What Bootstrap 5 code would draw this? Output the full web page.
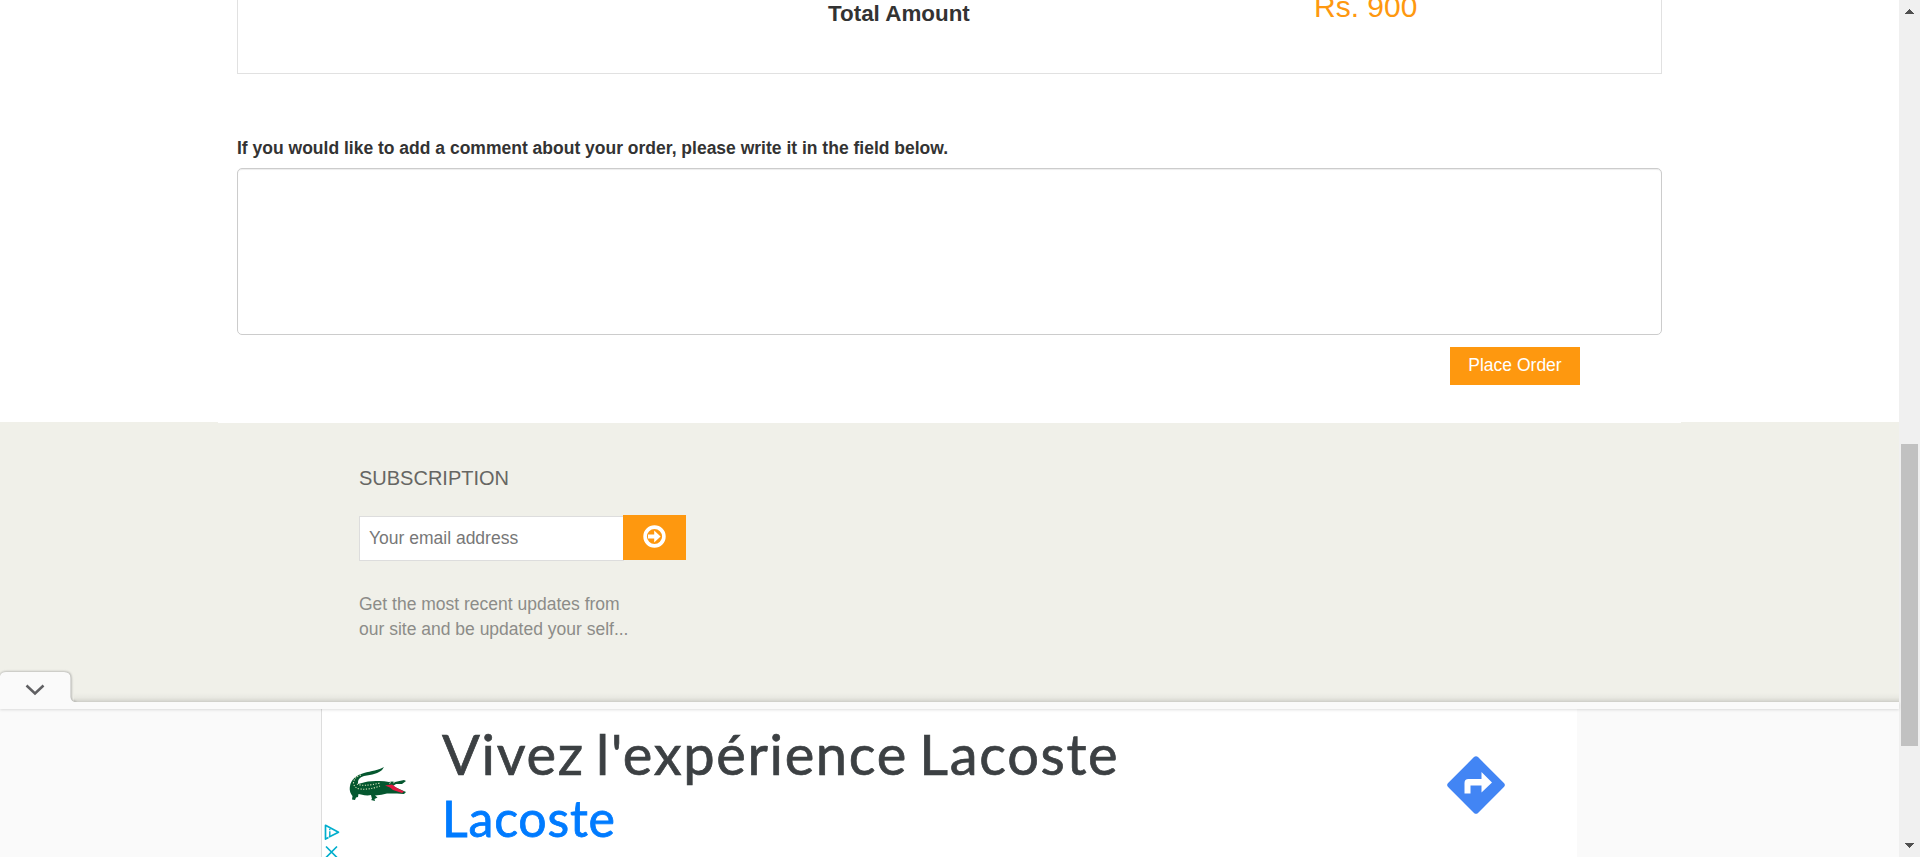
<!DOCTYPE html>
<html lang="en">
<head>
<meta charset="utf-8">
<meta name="viewport" content="width=device-width, initial-scale=1">
<title>Checkout</title>
<link href="https://cdn.jsdelivr.net/npm/bootstrap@5.3.0/dist/css/bootstrap.min.css" rel="stylesheet">
<style>
  body { font-family: "Liberation Sans", Arial, sans-serif; font-size: 17.5px; line-height: 25px; color: #333; background: #fff; }
  .page-view { width: 1899px; }
  .shop-container { width: 1463px; margin-left: 218px; padding: 0 19px; background: #fff; height: 423px; }
  .total-box { height: 74px; border: 1px solid #e1e1e1; border-top: 0; }
  .total-label { width: 730px; font-size: 22.4px; line-height: 26px; padding: 1px 0 0 590px; }
  .total-price { font-size: 30px; line-height: 30px; color: #fe980f; padding-left: 346px; margin-top: -8px; }
  .order-label { margin-top: 62px; line-height: 25px; margin-bottom: 7px; }
  .order-note { height: 167px; border: 1px solid #ccc; border-radius: 5px; resize: none; box-shadow: inset 0 1px 1px rgba(0,0,0,.075); }
  .btn-orange { background: #fe980f; color: #fff; border: 0; border-radius: 0; }
  .btn-place { width: 130px; height: 38px; margin: 12px 82px 0 0; padding: 0 0 2px; font-size: 17.5px; line-height: 25px; }
  .shop-footer { background: #f0f0e9; height: 280px; padding: 44px 0 0 359px; margin-top: -1px; }
  .footer-title { font-size: 20px; line-height: 24px; color: #666663; margin: 0 0 25px; }
  .mail-input { width: 265px; height: 45px; border: 1px solid #ddd; border-radius: 0; padding: 0 9px 1px; font-size: 17.5px; margin-top: 1px; }
  .mail-input::placeholder { color: #777; opacity: 1; }
  .btn-mail { width: 63px; height: 45px; margin-left: -1px; padding: 0 0 3px; position: relative; }
  .footer-text { color: #8c8c88; margin-top: 31px; line-height: 25px; }
  .ad-wrap { height: 155px; background: #fafafa; position: relative; }
  .ad-rail { height: 7px; background: #fafafa; box-shadow: 0 1px 3px rgba(0,0,0,.13); position: relative; }
  .ad-shade { position: absolute; left: 74px; right: 0; top: -9px; height: 9px; background: linear-gradient(rgba(0,0,0,0), rgba(0,0,0,.03) 50%, rgba(0,0,0,.12)); }
  .ad-tab { position: absolute; left: 0; top: -33px; }
  .ad-panel { width: 1256px; height: 148px; margin-left: 321px; background: #fff; border-left: 1px solid #ddd; overflow: hidden; }
  .ad-choices { width: 21px; padding: 115px 0 0 2px; }
  .ad-copy { width: 1036px; padding-left: 35px; font-family: Lato, "Open Sans", sans-serif; white-space: nowrap; }
  .ad-title { font-size: 56px; line-height: 64px; color: #3c4043; margin-top: 13px; letter-spacing: 1.65px; word-spacing: -4.500px; -webkit-text-stroke: .7px #3c4043; }
  .ad-brand { font-size: 50px; line-height: 58px; color: #007bff; margin-top: 3px; letter-spacing: .8px; -webkit-text-stroke: .8px #007bff; }
  .scroll-rail { width: 21px; background: #f0f0f0; padding: 9px 0 9px; }
  .scroll-thumb { width: 17px; height: 302px; margin: 430px 0 0 2px; background: #c1c1c1; }
</style>
</head>
<body class="overflow-hidden">
<div class="d-flex vh-100 overflow-hidden">
  <div class="page-view flex-shrink-0">
    <main class="shop-container position-relative">
      <div class="total-box d-flex">
        <div class="total-label fw-bold text-nowrap">Total Amount</div>
        <div class="total-price text-nowrap">Rs. 900</div>
      </div>
      <label class="order-label fw-bold d-block" for="note">If you would like to add a comment about your order, please write it in the field below.</label>
      <textarea id="note" class="form-control order-note"></textarea>
      <div class="d-flex justify-content-end">
        <button class="btn btn-orange btn-place" type="button">Place Order</button>
      </div>
    </main>
    <footer class="shop-footer">
      <h2 class="footer-title fw-normal">SUBSCRIPTION</h2>
      <form class="d-flex align-items-start">
        <input class="form-control mail-input" type="email" placeholder="Your email address">
        <button class="btn btn-orange btn-mail d-flex align-items-center justify-content-center" type="button" aria-label="Subscribe">
          <svg width="23" height="23" viewBox="0 0 23 23"><circle cx="11.500" cy="11.500" r="9.400" fill="none" stroke="#fff" stroke-width="3.600"/><path d="M5 9.500h6.200V5.600l6.400 5.900-6.400 5.900v-3.900H5z" fill="#fff"/></svg>
        </button>
      </form>
      <p class="footer-text mb-0">Get the most recent updates from<br>our site and be updated your self...</p>
    </footer>
    <aside class="ad-wrap">
      <div class="ad-shade"></div>
      <div class="ad-rail"></div>
      <svg class="ad-tab" width="82" height="41" viewBox="0 0 82 41">
        <defs><filter id="soft" x="-10%" y="-20%" width="120%" height="140%"><feGaussianBlur stdDeviation="1.300"/></filter></defs>
        <path d="M0 6Q1 2.500 6 2.500H65Q71.500 2.500 71.500 9V28Q72 32.500 76 32.500V34H0z" fill="#777" opacity=".55" filter="url(#soft)"/>
        <path d="M0 7Q1 3 6 3H64Q70.500 3 70.500 9V28Q71 33 76 33H82V39H0z" fill="#fafafa"/>
        <path d="M26.500 16.500L35 24.500L43.500 16.500" fill="none" stroke="#606063" stroke-width="2.500"/>
      </svg>
      <div class="ad-panel d-flex">
        <div class="ad-choices flex-shrink-0">
          <svg class="d-block" width="16" height="17" viewBox="0 0 16 17"><path d="M4.500 13.500L1.500 15V1.300L14.500 8.200L5 13" fill="none" stroke="#00aecd" stroke-width="1.700" stroke-linejoin="round"/><path d="M5.800 7.200v5M5.800 4.800v1.500" stroke="#00aecd" stroke-width="1.400"/></svg>
          <svg class="d-block mt-1" width="16" height="14" viewBox="0 0 16 14"><path d="M2 1.500L13 12.500M13 1.500L2 12.500" stroke="#00aecd" stroke-width="1.700"/></svg>
        </div>
        <svg class="flex-shrink-0" style="margin:57px 0 0 6px" width="58" height="36" viewBox="0 0 58 36">
          <path d="M35 1C30 4 22 5 15 7C7 9 2 14 1 20C0 25 2 28 3.500 30L3 33.500L6 34L7 31.500L9 31L9.500 28L12 28.500Q18 30 22 29L23 33L22 34L26 35L25.500 33L28.500 31.500L26 29.500Q33 29 38 27.500H48L55 28L57 26L48 22L44 20L47 18L53 18L57 15L55 14L46 16L43 15.500L40 16Q34 14.500 27 15Q18 15 13 17L9 18Q8 12 15 10C23 9 30 7 33 4z" fill="#04572f"/>
          <path d="M12 9Q5 11 4.500 17Q5 22 11 23Q20 24 31 20M8 18Q14 21 31 17" fill="none" stroke="#dce6bd" stroke-width="1.100" stroke-dasharray="1.200 1.500"/>
          <path d="M36 19.500L43 18.500L48 22L55 25.500L53 27L44 24L41 21.500z" fill="#e01840"/>
          <path d="M40 17.500l2-1M44 17l2-1" stroke="#e8ead0" stroke-width=".7"/>
        </svg>
        <div class="ad-copy flex-shrink-0">
          <div class="ad-title">Vivez l'expérience Lacoste</div>
          <div class="ad-brand">Lacoste</div>
        </div>
        <svg class="flex-shrink-0" style="margin:46px 0 0 3px" width="60" height="60" viewBox="0 0 60 60">
          <path d="M28 2.100Q30 .2 32 2.100L57.900 28Q59.800 30 57.900 32L32 57.900Q30 59.800 28 57.900L2.100 32Q.2 30 2.100 28z" fill="#4285f4"/>
          <path d="M18.500 38.500V28Q18.500 24 22.500 24H35.500V17L46 27.500L35.500 37.500V30.500H24.500V38.500z" fill="#fff"/>
        </svg>
      </div>
    </aside>
  </div>
  <div class="scroll-rail flex-shrink-0 d-flex flex-column">
    <svg class="d-block mx-auto flex-shrink-0" width="9" height="5" shape-rendering="crispEdges"><path d="M0 5L4.500 0L9 5z" fill="#505050"/></svg>
    <div class="scroll-thumb flex-shrink-0"></div>
    <svg class="d-block mx-auto mt-auto flex-shrink-0" width="9" height="5" shape-rendering="crispEdges"><path d="M0 0L4.500 5L9 0z" fill="#505050"/></svg>
  </div>
</div>
<script src="https://cdn.jsdelivr.net/npm/bootstrap@5.3.0/dist/js/bootstrap.bundle.min.js"></script>
</body>
</html>
